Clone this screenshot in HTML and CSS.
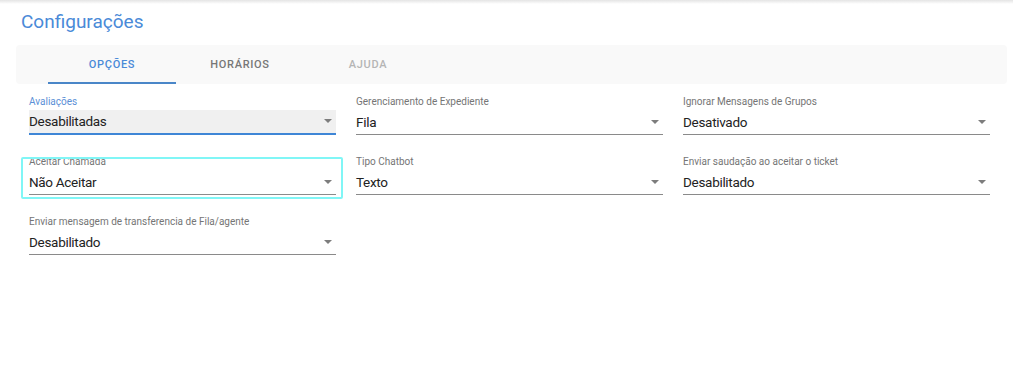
FILE: index.html
```html
<!DOCTYPE html>
<html lang="pt-BR">
<head>
    <meta charset="UTF-8">
    <meta name="viewport" content="width=device-width, initial-scale=1.0">
    <title>Configurações</title>
    <link rel="stylesheet" href="styles.css">
</head>
<body>
    <div class="top-shadow"></div>
    <div class="page">
        <h1 class="title">Configurações</h1>

        <div class="tabs">
            <div class="tab active">OPÇÕES</div>
            <div class="tab">HORÁRIOS</div>
            <div class="tab disabled">AJUDA</div>
        </div>

        <div class="fields">
            <div class="field filled">
                <label>Avaliações</label>
                <div class="select">Desabilitadas <span class="arrow"></span></div>
            </div>
            <div class="field">
                <label>Gerenciamento de Expediente</label>
                <div class="select">Fila <span class="arrow"></span></div>
            </div>
            <div class="field">
                <label>Ignorar Mensagens de Grupos</label>
                <div class="select">Desativado <span class="arrow"></span></div>
            </div>

            <div class="field focused">
                <label>Aceitar Chamada</label>
                <div class="select">Não Aceitar <span class="arrow"></span></div>
            </div>
            <div class="field">
                <label>Tipo Chatbot</label>
                <div class="select">Texto <span class="arrow"></span></div>
            </div>
            <div class="field">
                <label>Enviar saudação ao aceitar o ticket</label>
                <div class="select">Desabilitado <span class="arrow"></span></div>
            </div>

            <div class="field">
                <label>Enviar mensagem de transferencia de Fila/agente</label>
                <div class="select">Desabilitado <span class="arrow"></span></div>
            </div>
        </div>
    </div>
</body>
</html>
```

FILE: styles.css
```css
* {
    margin: 0;
    padding: 0;
    box-sizing: border-box;
}

body {
    font-family: Roboto, 'Liberation Sans', Arial, sans-serif;
    background: white;
    color: #222;
}

.top-shadow {
    height: 4px;
    background: linear-gradient(to bottom, #e4e4e4, #ffffff);
}

.page {
    padding: 0 6px 0 16px;
}

.title {
    font-size: 19px;
    font-weight: 400;
    color: #4a8ad8;
    line-height: 24px;
    padding: 6px 0 0 5px;
    margin-bottom: 11px;
}

.tabs {
    display: flex;
    background: #f9f9f9;
    border-radius: 4px;
    height: 39px;
    padding-left: 32px;
}

.tab {
    width: 128px;
    display: flex;
    align-items: center;
    justify-content: center;
    font-size: 11px;
    font-weight: 500;
    letter-spacing: 0.7px;
    color: #777;
    border-bottom: 2px solid transparent;
    padding-top: 2px;
}

.tab.active {
    color: #4a8ad8;
    border-bottom-color: #4a86c8;
}

.tab.disabled {
    color: #b5b5b5;
}

.fields {
    display: grid;
    grid-template-columns: repeat(3, 307px);
    column-gap: 20px;
    row-gap: 19px;
    padding: 11px 0 0 13px;
}

.field {
    position: relative;
    height: 41px;
}

.field label {
    display: block;
    font-size: 10px;
    color: #757575;
    line-height: 14px;
    height: 15px;
}

.select {
    height: 25px;
    display: flex;
    align-items: center;
    justify-content: space-between;
    font-size: 13.5px;
    letter-spacing: -0.3px;
    color: #222;
    border-bottom: 1px solid #8a8a8a;
    padding-bottom: 1px;
}

.arrow {
    width: 0;
    height: 0;
    border-left: 4.5px solid transparent;
    border-right: 4.5px solid transparent;
    border-top: 4px solid #7d7d7d;
    margin-right: 4px;
}

.field.filled label {
    color: #5b8fd6;
}

.field.filled .select {
    background: #f0f0f0;
    border-bottom: 2px solid #3f86d6;
}

.field.focused::after {
    content: '';
    position: absolute;
    top: 2px;
    left: -8px;
    right: -7px;
    bottom: -3px;
    border: 2px solid #80f6f6;
    border-radius: 2px;
}
```
